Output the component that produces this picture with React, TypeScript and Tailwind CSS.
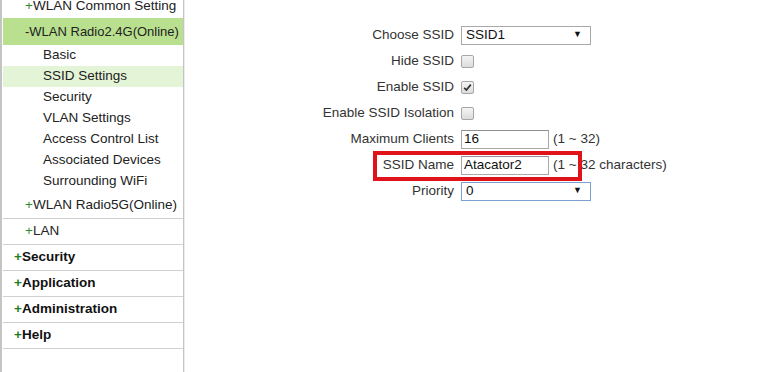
import React from 'react';

const font = { fontFamily: '"Liberation Sans", Arial, sans-serif' };

function SubItem({ label, active }: { label: string; active?: boolean }) {
  return (
    <div className={`flex h-[21px] items-center whitespace-nowrap pl-[40px] text-[13.5px] text-[#222] ${active ? 'bg-[#e4f4d6]' : ''}`}>
      {label}
    </div>
  );
}

function TopItem({ label }: { label: string }) {
  return (
    <div className="flex h-[26px] items-center whitespace-nowrap border-b border-[#d0d0d0] pl-[11px] text-[13.5px] font-bold text-[#111]">
      <span className="text-[#1e7e1e]">+</span>
      {label}
    </div>
  );
}

function Checkbox({ checked }: { checked?: boolean }) {
  return (
    <div className="flex h-[13px] w-[13px] items-center justify-center rounded-[2px] border border-[#a6a6a6] bg-gradient-to-b from-[#f4f4f4] to-[#dcdcdc]">
      {checked && (
        <svg width="9" height="9" viewBox="0 0 9 9">
          <path d="M1.2 4.8 L3.4 7 L7.8 1.6" stroke="#333" strokeWidth="1.7" fill="none" />
        </svg>
      )}
    </div>
  );
}

function Select({ value, focused }: { value: string; focused?: boolean }) {
  return (
    <div
      className={`flex h-[19px] w-[130px] items-center justify-between border bg-white pl-[4px] pr-[8px] text-[13.5px] text-[#111] ${
        focused ? 'border-[#7b9fcf]' : 'border-[#a9a9a9]'
      }`}
    >
      <span>{value}</span>
      <span className="text-[9px]">▼</span>
    </div>
  );
}

function TextInput({ value }: { value: string }) {
  return (
    <div className="flex h-[19px] w-[88px] items-center border border-[#a9a9a9] border-t-[#8f8f8f] bg-white pl-[2px] text-[13.5px] text-[#111]">
      {value}
    </div>
  );
}

function Row({ label, children }: { label: string; children: React.ReactNode }) {
  return (
    <div className="flex h-[26px] items-center">
      <div className="w-[274px] whitespace-nowrap pr-[7px] text-right text-[13.5px] text-[#333]">{label}</div>
      <div className="flex items-center gap-[4px] whitespace-nowrap text-[13.5px] text-[#333]">{children}</div>
    </div>
  );
}

export default function App() {
  return (
    <div className="flex h-[372px] w-[781px] overflow-hidden bg-white" style={font}>
      <div className="flex w-[187px] shrink-0">
        <div className="flex w-[184px] flex-col border-l-[2px] border-r border-[#c4c4c4] pl-[1px]">
          <div className="-mt-[5px] flex h-[23px] shrink-0 items-center whitespace-nowrap pl-[22px] text-[13.5px] text-[#222]">
            <span className="text-[#2c8a2c]">+</span>WLAN Common Setting
          </div>
          <div className="flex h-[27px] shrink-0 items-center whitespace-nowrap bg-[#b8e08e] pl-[22px] text-[13px] text-[#222]">
            -WLAN Radio2.4G(Online)
          </div>
          <SubItem label="Basic" />
          <SubItem label="SSID Settings" active />
          <SubItem label="Security" />
          <SubItem label="VLAN Settings" />
          <SubItem label="Access Control List" />
          <SubItem label="Associated Devices" />
          <SubItem label="Surrounding WiFi" />
          <div className="flex h-[27px] items-center whitespace-nowrap border-b border-[#d0d0d0] pl-[22px] text-[13.5px] text-[#222]">
            <span className="text-[#2c8a2c]">+</span>WLAN Radio5G(Online)
          </div>
          <div className="flex h-[26px] items-center whitespace-nowrap border-b border-[#d0d0d0] pl-[22px] text-[13.5px] text-[#222]">
            <span className="text-[#2c8a2c]">+</span>LAN
          </div>
          <TopItem label="Security" />
          <TopItem label="Application" />
          <TopItem label="Administration" />
          <TopItem label="Help" />
        </div>
        <div className="w-[1px] bg-[#ececec]" />
      </div>

      <div className="relative flex-1 pt-[22px]">
        <Row label="Choose SSID">
          <Select value="SSID1" />
        </Row>
        <Row label="Hide SSID">
          <Checkbox />
        </Row>
        <Row label="Enable SSID">
          <Checkbox checked />
        </Row>
        <Row label="Enable SSID Isolation">
          <Checkbox />
        </Row>
        <Row label="Maximum Clients">
          <TextInput value="16" />
          <span>(1 ~ 32)</span>
        </Row>
        <Row label="SSID Name">
          <TextInput value="Atacator2" />
          <span>(1 ~ 32 characters)</span>
        </Row>
        <Row label="Priority">
          <Select value="0" focused />
        </Row>

        <div className="pointer-events-none absolute left-[186px] top-[151px] h-[30px] w-[209px] border-[4px] border-[#e0121a]" />
      </div>
    </div>
  );
}
